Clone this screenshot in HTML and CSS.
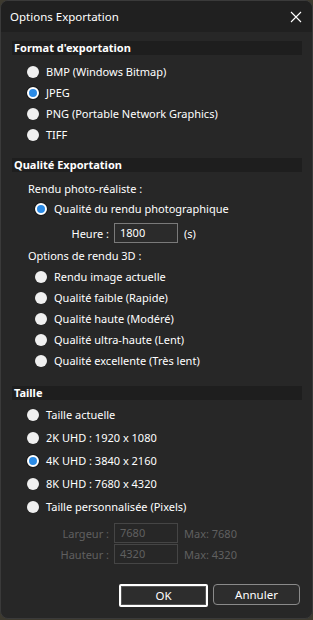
FILE: index.html
```html
<!DOCTYPE html>
<html lang="fr">
<head>
    <meta charset="UTF-8">
    <meta name="viewport" content="width=device-width, initial-scale=1.0">
    <title>Options Exportation</title>
    <link rel="stylesheet" href="styles.css">
</head>
<body>

    <div class="window">
        <!-- Title bar -->
        <div class="titlebar">
            <span class="title">Options Exportation</span>
            <svg class="close" width="12" height="12" viewBox="0 0 12 12">
                <path d="M1 1 L11 11 M11 1 L1 11" stroke="#ffffff" stroke-width="1.1" fill="none"/>
            </svg>
        </div>

        <div class="content">
            <!-- Format -->
            <div class="group-title first">Format d'exportation</div>
            <div class="options outer">
                <div class="option"><span class="radio"></span>BMP (Windows Bitmap)</div>
                <div class="option"><span class="radio checked"></span>JPEG</div>
                <div class="option"><span class="radio"></span>PNG (Portable Network Graphics)</div>
                <div class="option"><span class="radio"></span>TIFF</div>
            </div>

            <!-- Qualité -->
            <div class="group-title second">Qualité Exportation</div>
            <div class="sub-label photo">Rendu photo-réaliste :</div>
            <div class="option inner single"><span class="radio checked"></span>Qualité du rendu photographique</div>
            <div class="field heure">
                <span class="field-label">Heure :</span>
                <span class="input">1800</span>
                <span class="unit">(s)</span>
            </div>
            <div class="sub-label render3d">Options de rendu 3D :</div>
            <div class="options inner">
                <div class="option"><span class="radio"></span>Rendu image actuelle</div>
                <div class="option"><span class="radio"></span>Qualité faible (Rapide)</div>
                <div class="option"><span class="radio"></span>Qualité haute (Modéré)</div>
                <div class="option"><span class="radio"></span>Qualité ultra-haute (Lent)</div>
                <div class="option"><span class="radio"></span>Qualité excellente (Très lent)</div>
            </div>

            <!-- Taille -->
            <div class="group-title third">Taille</div>
            <div class="options outer tall">
                <div class="option"><span class="radio"></span>Taille actuelle</div>
                <div class="option"><span class="radio"></span>2K UHD : 1920 x 1080</div>
                <div class="option"><span class="radio checked"></span>4K UHD : 3840 x 2160</div>
                <div class="option"><span class="radio"></span>8K UHD : 7680 x 4320</div>
                <div class="option"><span class="radio"></span>Taille personnalisée (Pixels)</div>
            </div>
            <div class="field disabled largeur">
                <span class="field-label">Largeur :</span>
                <span class="input">7680</span>
                <span class="unit">Max: 7680</span>
            </div>
            <div class="field disabled hauteur">
                <span class="field-label">Hauteur :</span>
                <span class="input">4320</span>
                <span class="unit">Max: 4320</span>
            </div>

            <div class="buttons">
                <button class="btn ok">OK</button>
                <button class="btn">Annuler</button>
            </div>
        </div>
    </div>

</body>
</html>
```

FILE: styles.css
```css
body {
    margin: 0;
    background: #3d3a2f;
    font-family: "Noto Sans", "Open Sans", sans-serif;
    font-size: 11px;
    color: #ffffff;
}
.window {
    width: 313px;
    height: 619px;
    box-sizing: border-box;
    background: #272727;
    border: 1px solid #3a3a3a;
    border-radius: 8px;
    overflow: hidden;
}
.titlebar {
    height: 31px;
    background: #202020;
    display: flex;
    align-items: center;
    justify-content: space-between;
    padding: 0 10px 0 9px;
}
.title {
    font-size: 11.5px;
}
.content {
    padding: 0 10px 0 11px;
}
.group-title {
    height: 14px;
    line-height: 14px;
    background: #1e1e1e;
    font-weight: bold;
    padding-left: 2px;
}
.group-title.first { margin-top: 9px; }
.group-title.second { margin-top: 13px; }
.group-title.third { margin-top: 15px; }
.options {
    display: flex;
    flex-direction: column;
}
.options.outer { margin-top: 6px; }
.option {
    height: 21px;
    display: flex;
    align-items: center;
    gap: 7px;
    padding-left: 15px;
    white-space: nowrap;
}
.options.tall { margin-top: 3px; }
.options.tall .option { height: 23px; }
.inner .option, .option.inner { padding-left: 23px; }
.option.single { height: 19px; }
.radio {
    width: 12px;
    height: 12px;
    flex: none;
    border-radius: 50%;
    background: #f0f0f0;
    box-sizing: border-box;
}
.radio.checked {
    background: #2b8be6;
    border: 2px solid #ffffff;
    box-shadow: 0 0 0 1px #1a1a1a;
}
.sub-label {
    height: 20px;
    line-height: 20px;
    padding-left: 16px;
}
.sub-label.photo { margin-top: 7px; }
.sub-label.render3d { margin-top: 3px; }
.field {
    display: flex;
    align-items: center;
    height: 20px;
    padding-left: 37px;
    white-space: nowrap;
}
.field.heure { margin-top: 5px; }
.field.largeur { margin-top: 5px; }
.field.hauteur { margin-top: 1px; }
.field-label {
    width: 60px;
    text-align: right;
    margin-right: 5px;
}
.input {
    width: 64px;
    height: 20px;
    box-sizing: border-box;
    border: 1px solid #7a7a7a;
    background: #2b2b2b;
    padding-left: 5px;
    line-height: 18px;
}
.unit {
    margin-left: 6px;
}
.disabled .field-label,
.disabled .unit,
.disabled .input {
    color: #606060;
}
.disabled .input {
    border-color: #454545;
    background: #272727;
}
.buttons {
    display: flex;
    justify-content: flex-end;
    gap: 5px;
    margin-top: 20px;
    padding-right: 2px;
}
.btn {
    width: 87px;
    height: 21px;
    font-family: inherit;
    font-size: 11.5px;
    color: #ffffff;
    background: #2d2d2d;
    border: 1px solid #8a8a8a;
    border-radius: 4px;
}
.btn.ok {
    width: 89px;
    height: 23px;
    border: 2px solid #ffffff;
    border-radius: 2px;
    box-shadow: inset 0 0 0 1px #555555;
}
```
